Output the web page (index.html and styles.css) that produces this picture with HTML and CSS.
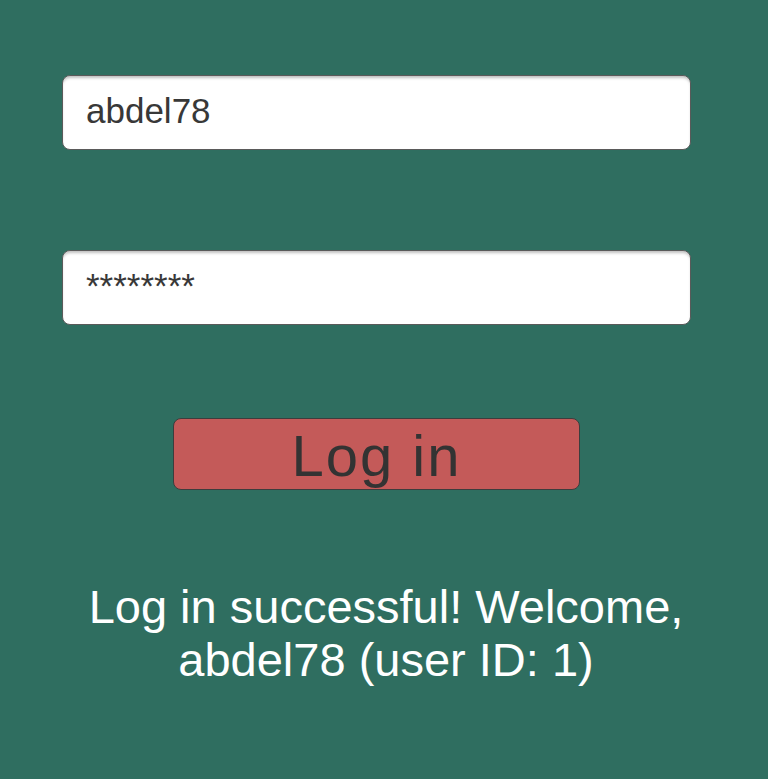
FILE: index.html
```html
<!DOCTYPE html>
<html>
<head>
<meta charset="utf-8">
<link rel="stylesheet" href="styles.css">
</head>
<body>
<div class="screen">
  <div class="form">
    <div class="field field-user"><span class="field-text">abdel78</span></div>
    <div class="field field-pass"><span class="field-text">********</span></div>
    <div class="button"><span class="button-text">Log in</span></div>
  </div>
  <p class="message">Log in successful! Welcome,<br>abdel78 (user ID: 1)</p>
</div>
</body>
</html>
```
FILE: styles.css
```css
html, body {
  margin: 0;
  padding: 0;
}
body {
  background: #2f6e60;
  font-family: "Liberation Sans", Arial, sans-serif;
}
.screen {
  width: 768px;
  height: 779px;
  overflow: hidden;
}
.form {
  display: flex;
  flex-direction: column;
  width: 629px;
  margin-left: 62px;
  padding-top: 75px;
}
.field {
  box-sizing: border-box;
  height: 75px;
  background: #fff;
  border: 1px solid #5a5a5a;
  border-radius: 8px;
  box-shadow: inset 0 3px 3px -1px rgba(0,0,0,0.25);
  padding-left: 23px;
  color: #383838;
  display: flex;
}
.field-text {
  font-family: "Liberation Sans", sans-serif;
  font-size: 35px;
  line-height: 1;
}
.field-user {
  align-items: center;
  padding-bottom: 5px;
}
.field-pass {
  margin-top: 100px;
  align-items: flex-start;
  padding-top: 17px;
}
.button {
  box-sizing: border-box;
  align-self: center;
  margin-top: 93px;
  width: 407px;
  height: 72px;
  background: #c45a59;
  border: 1px solid #3d3d3d;
  border-radius: 8px;
  display: flex;
  justify-content: center;
  align-items: center;
  color: #333;
}
.button-text {
  font-size: 58px;
  line-height: 1;
  letter-spacing: 2px;
  margin-top: 4px;
}
.message {
  margin: 90px 0 0;
  text-align: center;
  color: #fff;
  font-size: 47px;
  line-height: 53px;
  padding-left: 4px;
}
```
